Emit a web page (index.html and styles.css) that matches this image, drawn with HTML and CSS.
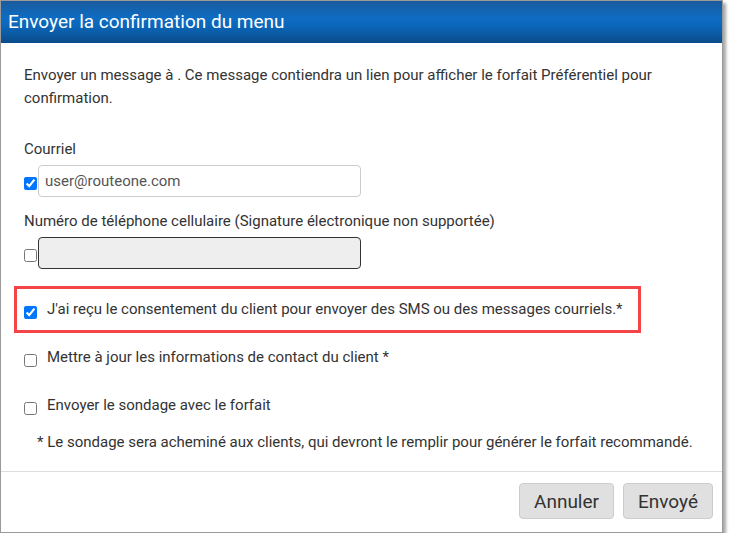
FILE: index.html
```html
<!DOCTYPE html>
<html lang="fr">
<head>
<meta charset="utf-8">
<title>Envoyer la confirmation du menu</title>
<link rel="stylesheet" href="styles.css">
</head>
<body>
<div class="dialog">
  <div class="dialog-header">Envoyer la confirmation du menu</div>
  <div class="dialog-body">
    <p class="intro">Envoyer un message à . Ce message contiendra un lien pour afficher le forfait Préférentiel pour confirmation.</p>

    <div class="field field-email">
      <div class="field-label">Courriel</div>
      <div class="field-row">
        <input type="checkbox" class="cb" checked>
        <input type="text" class="text-input" value="user@routeone.com">
      </div>
    </div>

    <div class="field field-phone">
      <div class="field-label">Numéro de téléphone cellulaire (Signature électronique non supportée)</div>
      <div class="field-row">
        <input type="checkbox" class="cb">
        <input type="text" class="text-input disabled" disabled>
      </div>
    </div>

    <div class="consent">
      <label class="check-row">
        <input type="checkbox" class="cb" checked>
        <span>J'ai reçu le consentement du client pour envoyer des SMS ou des messages courriels.*</span>
      </label>
    </div>

    <label class="check-row row-update">
      <input type="checkbox" class="cb">
      <span>Mettre à jour les informations de contact du client *</span>
    </label>

    <label class="check-row row-survey">
      <input type="checkbox" class="cb">
      <span>Envoyer le sondage avec le forfait</span>
    </label>

    <p class="footnote">* Le sondage sera acheminé aux clients, qui devront le remplir pour générer le forfait recommandé.</p>
  </div>
  <div class="dialog-footer">
    <button class="btn">Annuler</button>
    <button class="btn">Envoyé</button>
  </div>
</div>
</body>
</html>
```

FILE: styles.css
```css
html, body {
  margin: 0;
  padding: 0;
  background: #ffffff;
}

body {
  font-family: Roboto, "Liberation Sans", Arial, sans-serif;
  font-size: 15px;
  line-height: 23px;
  color: #333333;
}

.dialog {
  width: 723px;
  box-sizing: border-box;
  border: 1px solid #9a9a9a;
  background: #ffffff;
  box-shadow: 3px 3px 3px rgba(0, 0, 0, 0.35);
}

.dialog-header {
  height: 42px;
  line-height: 42px;
  padding-left: 7px;
  color: #ffffff;
  font-size: 19px;
  background: linear-gradient(to bottom, #1b5a9c 0%, #0d6cc2 40%, #0b66b9 60%, #0a4c8a 100%);
}

.dialog-body {
  padding: 21px 23px 17px 23px;
}

.intro {
  margin: 0;
}

.field-email {
  margin-top: 28px;
}

.field-phone {
  margin-top: 13px;
}

.field-row {
  display: flex;
  align-items: center;
  margin-top: 4px;
}

.cb {
  margin: 0;
  width: 13px;
  height: 13px;
  flex: none;
}

.field-row .cb {
  margin-top: 5px;
}

.text-input {
  box-sizing: border-box;
  width: 323px;
  height: 32px;
  margin-left: 1px;
  padding: 0 6px;
  border: 1px solid #cccccc;
  border-radius: 4px;
  font-family: Roboto, "Liberation Sans", Arial, sans-serif;
  font-size: 15px;
  color: #555555;
  background: #ffffff;
  outline: none;
}

.text-input.disabled {
  background: #eeeeee;
  border-color: #333333;
}

.consent {
  box-sizing: border-box;
  width: 627px;
  margin: 17px 0 0 -10px;
  padding: 9px 10px 9px 7px;
  border: 3px solid #f44448;
}

.check-row {
  display: flex;
  align-items: center;
  gap: 10px;
}

.check-row .cb {
  margin-top: 5px;
}

.row-update {
  margin-top: 13px;
}

.row-survey {
  margin-top: 25px;
}

.footnote {
  margin: 14px 0 0 13px;
  white-space: nowrap;
}

.dialog-footer {
  display: flex;
  justify-content: flex-end;
  gap: 9px;
  border-top: 1px solid #dddddd;
  padding: 11px 9px 13px 0;
}

.btn {
  height: 36px;
  padding: 0 14px;
  border: 1px solid #cccccc;
  border-radius: 4px;
  background: #e0e0e0;
  color: #333333;
  font-family: Roboto, "Liberation Sans", Arial, sans-serif;
  font-size: 19px;
}
```
